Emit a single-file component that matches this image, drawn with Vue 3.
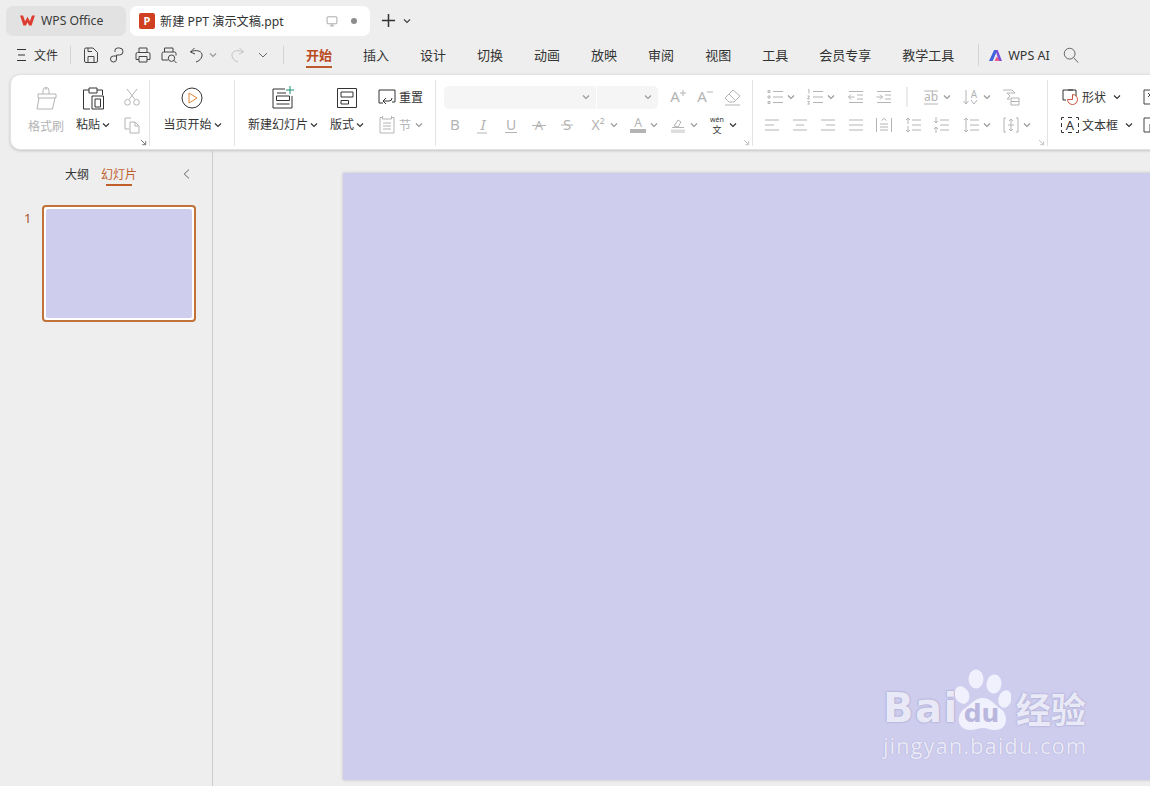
<template>
  <div class="app">
    <!-- Tabs -->
    <header class="titlebar">
      <div class="tab tab-home">
        <svg class="wps-logo" viewBox="0 0 18 14"><path d="M1 1.500h3.200l2.200 6.400L9 3l2.600 4.900 2.200-6.400H17l-3.600 11h-2.700L9 9l-1.700 3.500H4.600z" /></svg>
        <span>WPS Office</span>
      </div>
      <div class="tab tab-doc">
        <span class="ppt-logo">P</span>
        <span class="doc-name">新建 PPT 演示文稿.ppt</span>
        <Ico name="screen" class="doc-screen" />
        <span class="doc-dot"></span>
      </div>
      <svg class="tab-plus" viewBox="0 0 16 16"><path d="M8 1v14M1 8h14" /></svg>
      <Ico name="chev" class="chev tab-chev" />
    </header>

    <!-- Menu -->
    <nav class="menubar">
      <div class="file-menu">
        <Ico name="menu" class="tool" />
        <span>文件</span>
      </div>
      <i class="bar-sep"></i>
      <div class="quick">
        <Ico name="save" class="tool" />
        <Ico name="link" class="tool" />
        <Ico name="print" class="tool" />
        <Ico name="preview" class="tool" />
        <Ico name="undo" class="tool undo" />
        <Ico name="chev" class="chev" />
        <Ico name="redo" class="tool redo" />
        <Ico name="chevBig" class="tool more" />
      </div>
      <i class="bar-sep last"></i>
      <ul class="menu-tabs">
        <li v-for="(m, i) in menus" :key="m" :class="{ active: i === 0 }">{{ m }}</li>
      </ul>
      <i class="bar-sep ai-sep"></i>
      <svg class="ai-logo" viewBox="0 0 16 14">
        <path d="M1 13 6.500 1H10L5 13z" fill="#3f63dc" />
        <path d="M8 1h2.400L15 13h-3.600z" fill="#7b4fd8" />
        <path d="M7 13l2.400-5 3 5z" fill="#ef5a86" />
      </svg>
      <span class="ai-text">WPS AI</span>
      <Ico name="search" class="tool search" />
    </nav>

    <!-- Ribbon -->
    <section class="ribbon">
      <div class="group g-clip">
        <div class="big muted">
          <Ico name="brush" class="big-ico" />
          <span>格式刷</span>
        </div>
        <div class="big">
          <Ico name="paste" class="big-ico" />
          <span class="big-label">粘贴<Ico name="chev" class="chev dark" /></span>
        </div>
        <div class="small-col muted">
          <Ico name="cut" class="tool" />
          <Ico name="copy" class="tool" />
        </div>
        <Ico name="launch" class="launch" />
      </div>

      <div class="group g-play">
        <div class="big">
          <Ico name="play" class="big-ico" />
          <span class="big-label">当页开始<Ico name="chev" class="chev dark" /></span>
        </div>
      </div>

      <div class="group g-slide">
        <div class="big">
          <Ico name="newSlide" class="big-ico" />
          <span class="big-label">新建幻灯片<Ico name="chev" class="chev dark" /></span>
        </div>
        <div class="big">
          <Ico name="layout" class="big-ico" />
          <span class="big-label">版式<Ico name="chev" class="chev dark" /></span>
        </div>
        <div class="small-col wide">
          <div class="small-row"><Ico name="reset" class="tool" />重置</div>
          <div class="small-row muted"><Ico name="section" class="tool" />节<Ico name="chev" class="chev" /></div>
        </div>
      </div>

      <div class="group g-font">
        <div class="tool-row select-row">
          <div class="select font-select"><Ico name="chev" class="chev" /></div>
          <div class="select size-select"><Ico name="chev" class="chev" /></div>
          <Ico name="grow" class="tool a-grow" />
          <Ico name="shrink" class="tool a-shrink" />
          <Ico name="eraser" class="tool a-eraser" />
        </div>
        <div class="tool-row muted">
          <template v-for="it in fontRow" :key="it.icon">
            <Ico :name="it.icon" class="tool" :class="{ ink: it.icon === 'wen' }" :style="{ marginLeft: it.gap + 'px' }" />
            <Ico v-if="it.chev" name="chev" class="chev after" :class="{ dark: it.icon === 'wen' }" />
          </template>
        </div>
        <Ico name="launch" class="launch faint" />
      </div>

      <div class="group g-para">
        <div v-for="(row, r) in paraRows" :key="r" class="tool-row muted">
          <template v-for="it in row" :key="it.icon">
            <Ico :name="it.icon" class="tool" :style="{ marginLeft: it.gap + 'px' }" />
            <Ico v-if="it.chev" name="chev" class="chev after" />
          </template>
        </div>
        <Ico name="launch" class="launch faint" />
      </div>

      <div class="group g-shape">
        <div class="shape-col">
          <div class="small-row"><Ico name="shape" class="tool" />形状<Ico name="chev" class="chev dark" /></div>
          <div class="small-row"><Ico name="textbox" class="tool" />文本框<Ico name="chev" class="chev dark" /></div>
        </div>
        <div class="shape-col cut">
          <Ico name="cutA" class="tool" />
          <Ico name="cutB" class="tool" />
        </div>
      </div>
    </section>

    <!-- Body -->
    <main class="workspace">
      <aside class="sidebar">
        <div class="side-tabs">
          <span>大纲</span>
          <span class="active">幻灯片</span>
          <Ico name="back" class="tool side-back" />
        </div>
        <div class="thumb-row">
          <span class="thumb-no">1</span>
          <div class="thumb"><div class="thumb-fill"></div></div>
        </div>
      </aside>
      <div class="canvas">
        <div class="slide">
          <div class="watermark">
            <div class="mark-top">
              <span class="mark-bai">Bai</span>
              <div class="mark-paw">
                <svg viewBox="0 0 56 62">
                  <ellipse cx="21" cy="10" rx="7.500" ry="9.500" />
                  <ellipse cx="39" cy="15" rx="7.500" ry="9.500" transform="rotate(8 39 15)" />
                  <ellipse cx="7" cy="26" rx="7" ry="9" transform="rotate(-25 7 26)" />
                  <ellipse cx="50" cy="30" rx="6.500" ry="9" transform="rotate(15 50 30)" />
                  <path d="M28 29c8 0 11 7 18 11 7 5 8 21-6 21-5 0-8-2-12-2s-8 2-13 2C2 61 1 46 9 40c7-4 10-11 19-11z" />
                </svg>
                <span class="mark-du">du</span>
              </div>
              <span class="mark-cn">经验</span>
            </div>
            <div class="mark-url">jingyan.baidu.com</div>
          </div>
        </div>
      </div>
    </main>
  </div>
</template>

<script setup>
import { h } from 'vue'

const menus = ['开始', '插入', '设计', '切换', '动画', '放映', '审阅', '视图', '工具', '会员专享', '教学工具']

// d = stroked path, t = text inside the icon, bar = filled strip, accent = coloured stroke
const icons = {
  chev: { vb: '0 0 8 8', d: 'M1 2.500 4 5.500 7 2.500' },
  chevBig: { d: 'M5 7.500 10 12.500 15 7.500' },
  menu: { d: 'M5 4.500h9M6 10h7M5 15.500h9' },
  screen: { d: 'M4 4h12a1 1 0 0 1 1 1v8a1 1 0 0 1-1 1H4a1 1 0 0 1-1-1V5a1 1 0 0 1 1-1zM10 14v3M7 17h6' },
  save: { d: 'M3.500 4.500a1.500 1.500 0 0 1 1.500-1.500h7l4.500 4.500v8.500a1.500 1.500 0 0 1-1.500 1.500H5A1.500 1.500 0 0 1 3.500 16zM7 17.500v-6h6v6M7 3v3.500h4' },
  link: { d: 'M8 7V5.500A2.500 2.500 0 0 1 10.500 3h2A3.500 3.500 0 0 1 12.500 10H9.500V14A3 3 0 1 1 6.500 11H9.500' },
  print: { d: 'M6 7.500V3h8v4.500M6 14.500H3V9a1.500 1.500 0 0 1 1.500-1.500h11A1.500 1.500 0 0 1 17 9v5.500h-3M6 11.500h8V17H6z' },
  preview: { d: 'M5.500 7V3h8.500v4M9 15H3V8.500A1.500 1.500 0 0 1 4.500 7h11A1.500 1.500 0 0 1 17 8.500v2M12.500 10a3.200 3.200 0 1 0 0 6.400 3.200 3.200 0 0 0 0-6.400zM15 15.500l2.500 2.500' },
  undo: { d: 'M7.500 3 3.500 7l4.500 2M3.500 7C9 4 16 6 15 11c-.5 3-3 5-6 6' },
  redo: { d: 'M12.500 3l4 4-4.500 2M16.500 7C11 4 4 6 5 11c.5 3 3 5 6 6' },
  search: { d: 'M8.500 2.500a6 6 0 1 0 0 12 6 6 0 0 0 0-12zM13 13l5 5.500' },
  back: { d: 'M12.500 4.500 6.500 10l6 5.500' },
  launch: { vb: '0 0 8 8', d: 'M1 1l5.500 5.500M6.500 2.500v4h-4' },
  brush: { vb: '0 0 26 26', d: 'M10 9V5.500a3 3 0 0 1 6 0V9M5 9h18v4H5zM6 13l-2 11h15.500L22 13M13 3v2' },
  paste: { vb: '0 0 26 26', d: 'M9 5H3.500v19H10M17 5h5.500v5M9 3h8v5H9zM12 11h11.500v13H12zM15 14h5.500v8H15z' },
  cut: { d: 'M5 2l8 10.500M15 2 7 12.500M5.500 12.500a2.800 2.800 0 1 0 0 5.600 2.800 2.800 0 0 0 0-5.600zM14.500 12.500a2.800 2.800 0 1 0 0 5.600 2.800 2.800 0 0 0 0-5.600z' },
  copy: { d: 'M9 3H3v11h4M8 7h5l4 4v7H8zM13 7v4h4' },
  play: { vb: '0 0 26 26', d: 'M13 3a10 10 0 1 0 0 20 10 10 0 0 0 0-20z', accent: { d: 'M10 8l8 5-8 5z', color: '#e0853a' } },
  newSlide: { vb: '0 0 26 26', d: 'M15 4H3v19h19V11M7 8h9M6.500 11h13v4.500h-13zM6.500 19h13', accent: { d: 'M20 1v8M16 5h8', color: '#1b8f74' } },
  layout: { vb: '0 0 26 26', d: 'M3.500 3.500h19v19h-19zM7 7h12v5H7zM7 15.500h7.500V19H7z' },
  reset: { d: 'M6 16H2V3h16v12h-3M9 11l-3 3 3 3M6 14h6a3 3 0 0 0 3-3' },
  section: { d: 'M3 2.500h2.500M14.500 2.500H17V18H3V2.500M5.500 1v3h9V1M6 8h8M6 11h8M6 14h8' },
  grow: { t: 'A', ts: 15, tx: 8, d: 'M13 6h6M16 3v6' },
  shrink: { t: 'A', ts: 15, tx: 8, d: 'M13 5h6' },
  eraser: { d: 'M11 3 18 9 12 15H7L3 11zM7 7l6 6M3 18h15' },
  bold: { t: 'B', ts: 15 },
  italic: { t: 'I', ts: 15, ti: true, d: 'M4 18h10' },
  under: { t: 'U', ts: 14, d: 'M4 17.500h12' },
  strike: { t: 'A', ts: 13, d: 'M3 10.500h14' },
  shadow: { t: 'S', ts: 15, d: 'M4 10h12' },
  sup: { t: 'X²', ts: 14, tx: 10 },
  fontColor: { t: 'A', ts: 12, ty: 12, bar: 'M2 14h16v4H2z' },
  hl: { d: 'M6 11l4-6 3 2-3 5zM4 12.500h12', bar: 'M3 14.500h14v3.500H3z', barOp: 0.45 },
  wen: { t: 'wén', ts: 7, ty: 7, t2: '文', t2s: 9, t2y: 18 },
  bullets: { d: 'M8 4.500h10M8 10h10M8 15.500h10M3 3.500h2v2H3zM3 9h2v2H3zM3 14.500h2v2H3z' },
  numbers: { d: 'M8 4.500h10M8 10h10M8 15.500h10M3 3l1-.5v4M2.500 9h2l-2 3h2.200M2.500 14.500h2l-1 1.300 1 1.300h-2' },
  outdent: { d: 'M3 4.500h14M11 8h6M11 12h6M3 15.500h14M8.500 10h-6M5 7.500 2.500 10 5 12.500' },
  indent: { d: 'M3 4.500h14M11 8h6M11 12h6M3 15.500h14M2.500 10h6M6 7.500 8.500 10 6 12.500' },
  vsep: { d: 'M10 0v20', op: 0.5 },
  ab: { t: 'ab', ts: 12, ty: 14, d: 'M3 4h14M3 17h14' },
  sort: { t: 'A', ts: 10, tx: 13, ty: 11, d: 'M5 3v14M2.500 14 5 17l2.500-3M10 13l3 4 3-4' },
  smart: { d: 'M2 3h9l3 3H6l3 3-3 3h3M10 11h8v7h-8zM10 14.500h8' },
  left: { d: 'M3 5h14M3 10h9M3 15h14' },
  center: { d: 'M3 5h14M6 10h8M3 15h14' },
  right: { d: 'M3 5h14M8 10h9M3 15h14' },
  justify: { d: 'M3 5h14M3 10h14M3 15h14' },
  dist: { d: 'M2.500 3v14M17.500 3v14M6 9h8M6 12h8M6 15h8M7.500 5.500 10 3.500l2.500 2' },
  lineUp: { d: 'M9 5h9M9 10h9M9 15h9M5 3v6M3 5l2-2 2 2M5 11v6M3 15l2 2 2-2' },
  lineDown: { d: 'M9 5h9M9 10h9M9 15h9M5 2v6M3 6l2 2 2-2M5 12v6M3 14l2-2 2 2' },
  lineH: { d: 'M9 5h9M9 10h9M9 15h9M5 3v14M3 5l2-2 2 2M3 15l2 2 2-2' },
  valign: { d: 'M5 3H3v14h2M15 3h2v14h-2M7 10h6M10 4v12M8 6l2-2 2 2M8 14l2 2 2-2' },
  shape: { d: 'M13 3H3v10h3M8 3h8v6', accent: { d: 'M12.500 7.500a5 5 0 1 1-5 5h5z', color: '#c8553d' } },
  textbox: { t: 'A', ts: 13, d: 'M4 2.500H1.500V5M16 2.500h2.500V5M4 17.500H1.500V15M16 17.500h2.500V15M1.500 8v4M18.500 8v4M8 2.500h4M8 17.500h4' },
  cutA: { d: 'M2 3h18v14H2zM6 6l2 2-2 2' },
  cutB: { d: 'M2 3h12v6H8v8H2z' },
}

const Ico = (props) => {
  const g = icons[props.name]
  const kids = []
  if (g.bar) kids.push(h('path', { d: g.bar, fill: 'currentColor', stroke: 'none', opacity: g.barOp || 1 }))
  if (g.d) kids.push(h('path', { d: g.d, opacity: g.op || 1 }))
  if (g.accent) kids.push(h('path', { d: g.accent.d, stroke: g.accent.color }))
  if (g.t) {
    kids.push(h('text', {
      x: g.tx || 10,
      y: g.ty || 15,
      'text-anchor': 'middle',
      'font-size': g.ts,
      'font-style': g.ti ? 'italic' : 'normal',
      'font-family': '"Noto Sans", sans-serif',
      fill: 'currentColor',
      stroke: 'none',
    }, g.t))
  }
  if (g.t2) {
    kids.push(h('text', {
      x: 10,
      y: g.t2y,
      'text-anchor': 'middle',
      'font-size': g.t2s,
      'font-family': '"Noto Sans CJK SC", sans-serif',
      fill: 'currentColor',
      stroke: 'none',
    }, g.t2))
  }
  return h('svg', { viewBox: g.vb || '0 0 20 20', class: 'ico' }, kids)
}

// turn icon centres into gaps so the row stays in normal flow
const flow = (start, items) => {
  let cursor = start
  return items.map(([icon, x, chev]) => {
    const gap = x - 10 - cursor
    cursor = x + 10 + (chev ? 10 : 0)
    return { icon, gap, chev }
  })
}

const fontRow = flow(441, [
  ['bold', 455],
  ['italic', 483],
  ['under', 511],
  ['strike', 539],
  ['shadow', 567],
  ['sup', 598, true],
  ['fontColor', 638, true],
  ['hl', 678, true],
  ['wen', 717, true],
])

const paraRows = [
  flow(757, [
    ['bullets', 775, true],
    ['numbers', 815, true],
    ['outdent', 856],
    ['indent', 884],
    ['vsep', 907],
    ['ab', 931, true],
    ['sort', 971, true],
    ['smart', 1011],
  ]),
  flow(757, [
    ['left', 772],
    ['center', 800],
    ['right', 828],
    ['justify', 856],
    ['dist', 884],
    ['lineUp', 913],
    ['lineDown', 941],
    ['lineH', 971, true],
    ['valign', 1011, true],
  ]),
]
</script>

<style scoped>
.app {
  width: 1150px;
  height: 786px;
  overflow: hidden;
  display: flex;
  flex-direction: column;
  background: #eeeeee;
  color: #333;
  font-family: "Noto Sans", "Noto Sans CJK SC", sans-serif;
  font-size: 12px;
}

.ico {
  display: block;
  flex: none;
  fill: none;
  stroke: currentColor;
  stroke-width: 1;
}

.tool {
  width: 20px;
  height: 20px;
}

.chev {
  width: 8px;
  height: 8px;
  stroke-width: 1.2;
  color: #999;
  margin-left: 2px;
}

.chev.dark {
  color: #333;
}

.muted {
  color: #b4b4b4;
}

/* Tabs */
.titlebar {
  height: 36px;
  flex: none;
  display: flex;
  align-items: flex-end;
  padding-left: 6px;
  gap: 4px;
}

.tab {
  height: 30px;
  display: flex;
  align-items: center;
  box-sizing: border-box;
  padding-bottom: 1px;
  border-radius: 7px;
  font-size: 12.200px;
}

.tab-home {
  width: 120px;
  background: #e2e2e2;
  padding-left: 13px;
  color: #3c3c3c;
}

.wps-logo {
  width: 17px;
  height: 13px;
  margin-right: 5px;
  fill: #dc3b30;
}

.tab-doc {
  width: 240px;
  background: #fff;
  padding-left: 9px;
}

.ppt-logo {
  width: 16px;
  height: 16px;
  border-radius: 2px;
  background: #cf3f22;
  color: #fff;
  font-size: 11px;
  font-weight: 700;
  line-height: 16px;
  text-align: center;
  margin-right: 5px;
}

.doc-name {
  width: 163px;
  white-space: nowrap;
}

.doc-screen {
  width: 14px;
  height: 14px;
  color: #888;
  margin-left: 2px;
}

.doc-dot {
  width: 6px;
  height: 6px;
  border-radius: 50%;
  background: #8c8c8c;
  margin-left: 12px;
}

.tab-plus {
  width: 15px;
  height: 15px;
  margin: 0 0 8px 7px;
  fill: none;
  stroke: #333;
  stroke-width: 1.600;
}

.tab-chev {
  color: #444;
  margin: 0 0 11px 3px;
}

/* Menu */
.menubar {
  height: 38px;
  flex: none;
  display: flex;
  align-items: center;
  box-sizing: border-box;
  padding-left: 12px;
  color: #444;
}

.file-menu {
  display: flex;
  align-items: center;
  gap: 2px;
  color: #333;
}

.bar-sep {
  width: 1px;
  height: 18px;
  background: #d4d4d4;
  margin-left: 12px;
}

.quick {
  display: flex;
  align-items: center;
  margin-left: 10px;
  gap: 6px;
}

.quick .undo {
  margin-left: 2px;
}

.quick .chev {
  margin-left: -4px;
}

.quick .redo {
  color: #c4c4c4;
  margin-left: 4px;
}

.quick .more {
  width: 16px;
  height: 16px;
  margin-left: 2px;
}

.bar-sep.last {
  margin-left: 12px;
}

.menu-tabs {
  display: flex;
  gap: 31px;
  margin: 0 0 0 22px;
  padding: 0;
  list-style: none;
  font-size: 13px;
  color: #333;
}

.menu-tabs li {
  position: relative;
  line-height: 20px;
}

.menu-tabs .active {
  color: #bb4a1f;
  font-weight: 700;
}

.menu-tabs .active::after {
  content: "";
  position: absolute;
  left: 0;
  right: 0;
  bottom: -3px;
  height: 2px;
  background: #bb5a2a;
}

.bar-sep.ai-sep {
  margin-left: 24px;
  height: 22px;
}

.ai-logo {
  width: 15px;
  height: 13px;
  margin-left: 9px;
}

.ai-text {
  margin-left: 5px;
  color: #333;
  font-size: 12.500px;
  white-space: nowrap;
}

.search {
  margin-left: 12px;
  width: 18px;
  height: 18px;
  color: #555;
}

/* Ribbon */
.ribbon {
  height: 76px;
  flex: none;
  display: flex;
  box-sizing: border-box;
  width: 1200px;
  margin-left: 10px;
  padding: 5px 0 3px;
  background: #fff;
  border: 1px solid #e2e2e2;
  border-radius: 10px;
  box-shadow: 0 1px 3px rgba(0, 0, 0, 0.18);
}

.group {
  position: relative;
  flex: none;
  display: flex;
  box-sizing: border-box;
  border-right: 1px solid #e3e3e3;
  padding-top: 5px;
}

.g-clip {
  width: 139px;
  padding-left: 17px;
  gap: 12px;
}

.g-play {
  width: 85px;
  justify-content: center;
  padding-left: 1px;
}

.g-slide {
  width: 201px;
  padding-left: 13px;
  gap: 12px;
}

.g-font {
  width: 317px;
  flex-direction: column;
  gap: 4px;
  padding-left: 5px;
}

.g-para {
  width: 295px;
  flex-direction: column;
  gap: 4px;
  padding-left: 4px;
}

.g-shape {
  border-right: none;
  padding-left: 12px;
  gap: 9px;
}

.big {
  display: flex;
  flex-direction: column;
  align-items: center;
  gap: 6px;
  color: #333;
}

.big.muted {
  color: #b4b4b4;
}

.big-ico {
  width: 26px;
  height: 26px;
  color: #333;
}

.big.muted .big-ico {
  color: #b4b4b4;
}

.big-label {
  display: flex;
  align-items: center;
  line-height: 16px;
  white-space: nowrap;
}

.small-col {
  display: flex;
  flex-direction: column;
  gap: 8px;
  margin-top: 2px;
}

.small-col.wide {
  margin-left: 1px;
  gap: 8px;
}

.small-row {
  display: flex;
  align-items: center;
  height: 20px;
  gap: 2px;
  white-space: nowrap;
  color: #333;
}

.small-row.muted {
  color: #b4b4b4;
}

.launch {
  position: absolute;
  right: 2px;
  bottom: 0;
  width: 7px;
  height: 7px;
  color: #666;
}

.launch.faint {
  color: #bbb;
}

.tool-row {
  display: flex;
  align-items: center;
  height: 24px;
}

.ink {
  color: #333;
}

.chev.after {
  margin-left: 2px;
}

.select {
  display: flex;
  align-items: center;
  justify-content: flex-end;
  height: 23px;
  box-sizing: border-box;
  padding-right: 6px;
  background: #f5f5f5;
  color: #b4b4b4;
}

.font-select {
  width: 152px;
  margin-left: 3px;
  border-radius: 5px 0 0 5px;
}

.size-select {
  width: 61px;
  margin-left: 1px;
  border-radius: 0 5px 5px 0;
}

.select-row {
  color: #b4b4b4;
}

.a-grow {
  margin-left: 9px;
}

.a-shrink {
  margin-left: 7px;
}

.a-eraser {
  margin-left: 8px;
}

.shape-col {
  display: flex;
  flex-direction: column;
  gap: 8px;
  margin-top: 2px;
}

.shape-col .chev {
  margin-left: 5px;
}

.shape-col.cut {
  color: #444;
}

/* Body */
.workspace {
  flex: 1;
  min-height: 0;
  display: flex;
}

.sidebar {
  width: 213px;
  flex: none;
  box-sizing: border-box;
  border-right: 1px solid #cdcdcd;
}

.side-tabs {
  display: flex;
  align-items: center;
  gap: 12px;
  height: 20px;
  margin-top: 14px;
  padding-left: 65px;
}

.side-tabs .active {
  position: relative;
  color: #c0602f;
}

.side-tabs .active::after {
  content: "";
  position: absolute;
  left: 5px;
  right: 5px;
  bottom: -3px;
  height: 2px;
  background: #bf5f2c;
}

.side-back {
  width: 16px;
  height: 16px;
  margin-left: 30px;
  color: #444;
}

.thumb-row {
  display: flex;
  margin-top: 21px;
  padding-left: 24px;
}

.thumb-no {
  width: 18px;
  line-height: 27px;
  font-size: 13px;
  color: #a9552b;
}

.thumb {
  width: 154px;
  height: 117px;
  box-sizing: border-box;
  padding: 2px;
  background: #fff;
  border: 2px solid #c07238;
  border-radius: 4px;
}

.thumb-fill {
  height: 100%;
  background: #cfcdee;
  border-radius: 2px;
}

.canvas {
  flex: 1;
  min-width: 0;
  padding: 23px 0 0 130px;
  overflow: hidden;
}

.slide {
  position: relative;
  width: 900px;
  height: 607px;
  background: #cfcdee;
  box-shadow: 0 0 3px rgba(0, 0, 0, 0.2);
}

.watermark {
  position: absolute;
  left: 540px;
  top: 486px;
  color: rgba(242, 242, 253, 0.92);
}

.mark-top {
  display: flex;
  align-items: flex-end;
  height: 72px;
}

.mark-bai {
  font-family: "DejaVu Sans", sans-serif;
  font-size: 40px;
  font-weight: 700;
  letter-spacing: 1.500px;
  line-height: 46px;
  text-shadow: 0 0 2px rgba(120, 120, 165, 0.8);
}

.mark-paw {
  position: relative;
  width: 56px;
  height: 62px;
  margin: 0 5px 0 -4px;
}

.mark-paw svg {
  display: block;
  width: 56px;
  height: 62px;
  fill: rgba(242, 242, 253, 0.95);
}

.mark-du {
  position: absolute;
  left: 9px;
  bottom: 2px;
  font-family: "DejaVu Sans", sans-serif;
  font-size: 25px;
  font-weight: 700;
  line-height: 31px;
  color: #b9b7de;
}

.mark-cn {
  font-family: "Noto Sans CJK SC", sans-serif;
  font-size: 35px;
  font-weight: 700;
  line-height: 46px;
  text-shadow: 0 0 2px rgba(120, 120, 165, 0.7);
}

.mark-url {
  font-family: "Open Sans", sans-serif;
  font-size: 22px;
  line-height: 28px;
  letter-spacing: 1px;
  white-space: nowrap;
  text-shadow: 0 0 1px rgba(120, 120, 165, 0.6);
}
</style>

<style>
html,
body {
  margin: 0;
  overflow: hidden;
}
</style>
